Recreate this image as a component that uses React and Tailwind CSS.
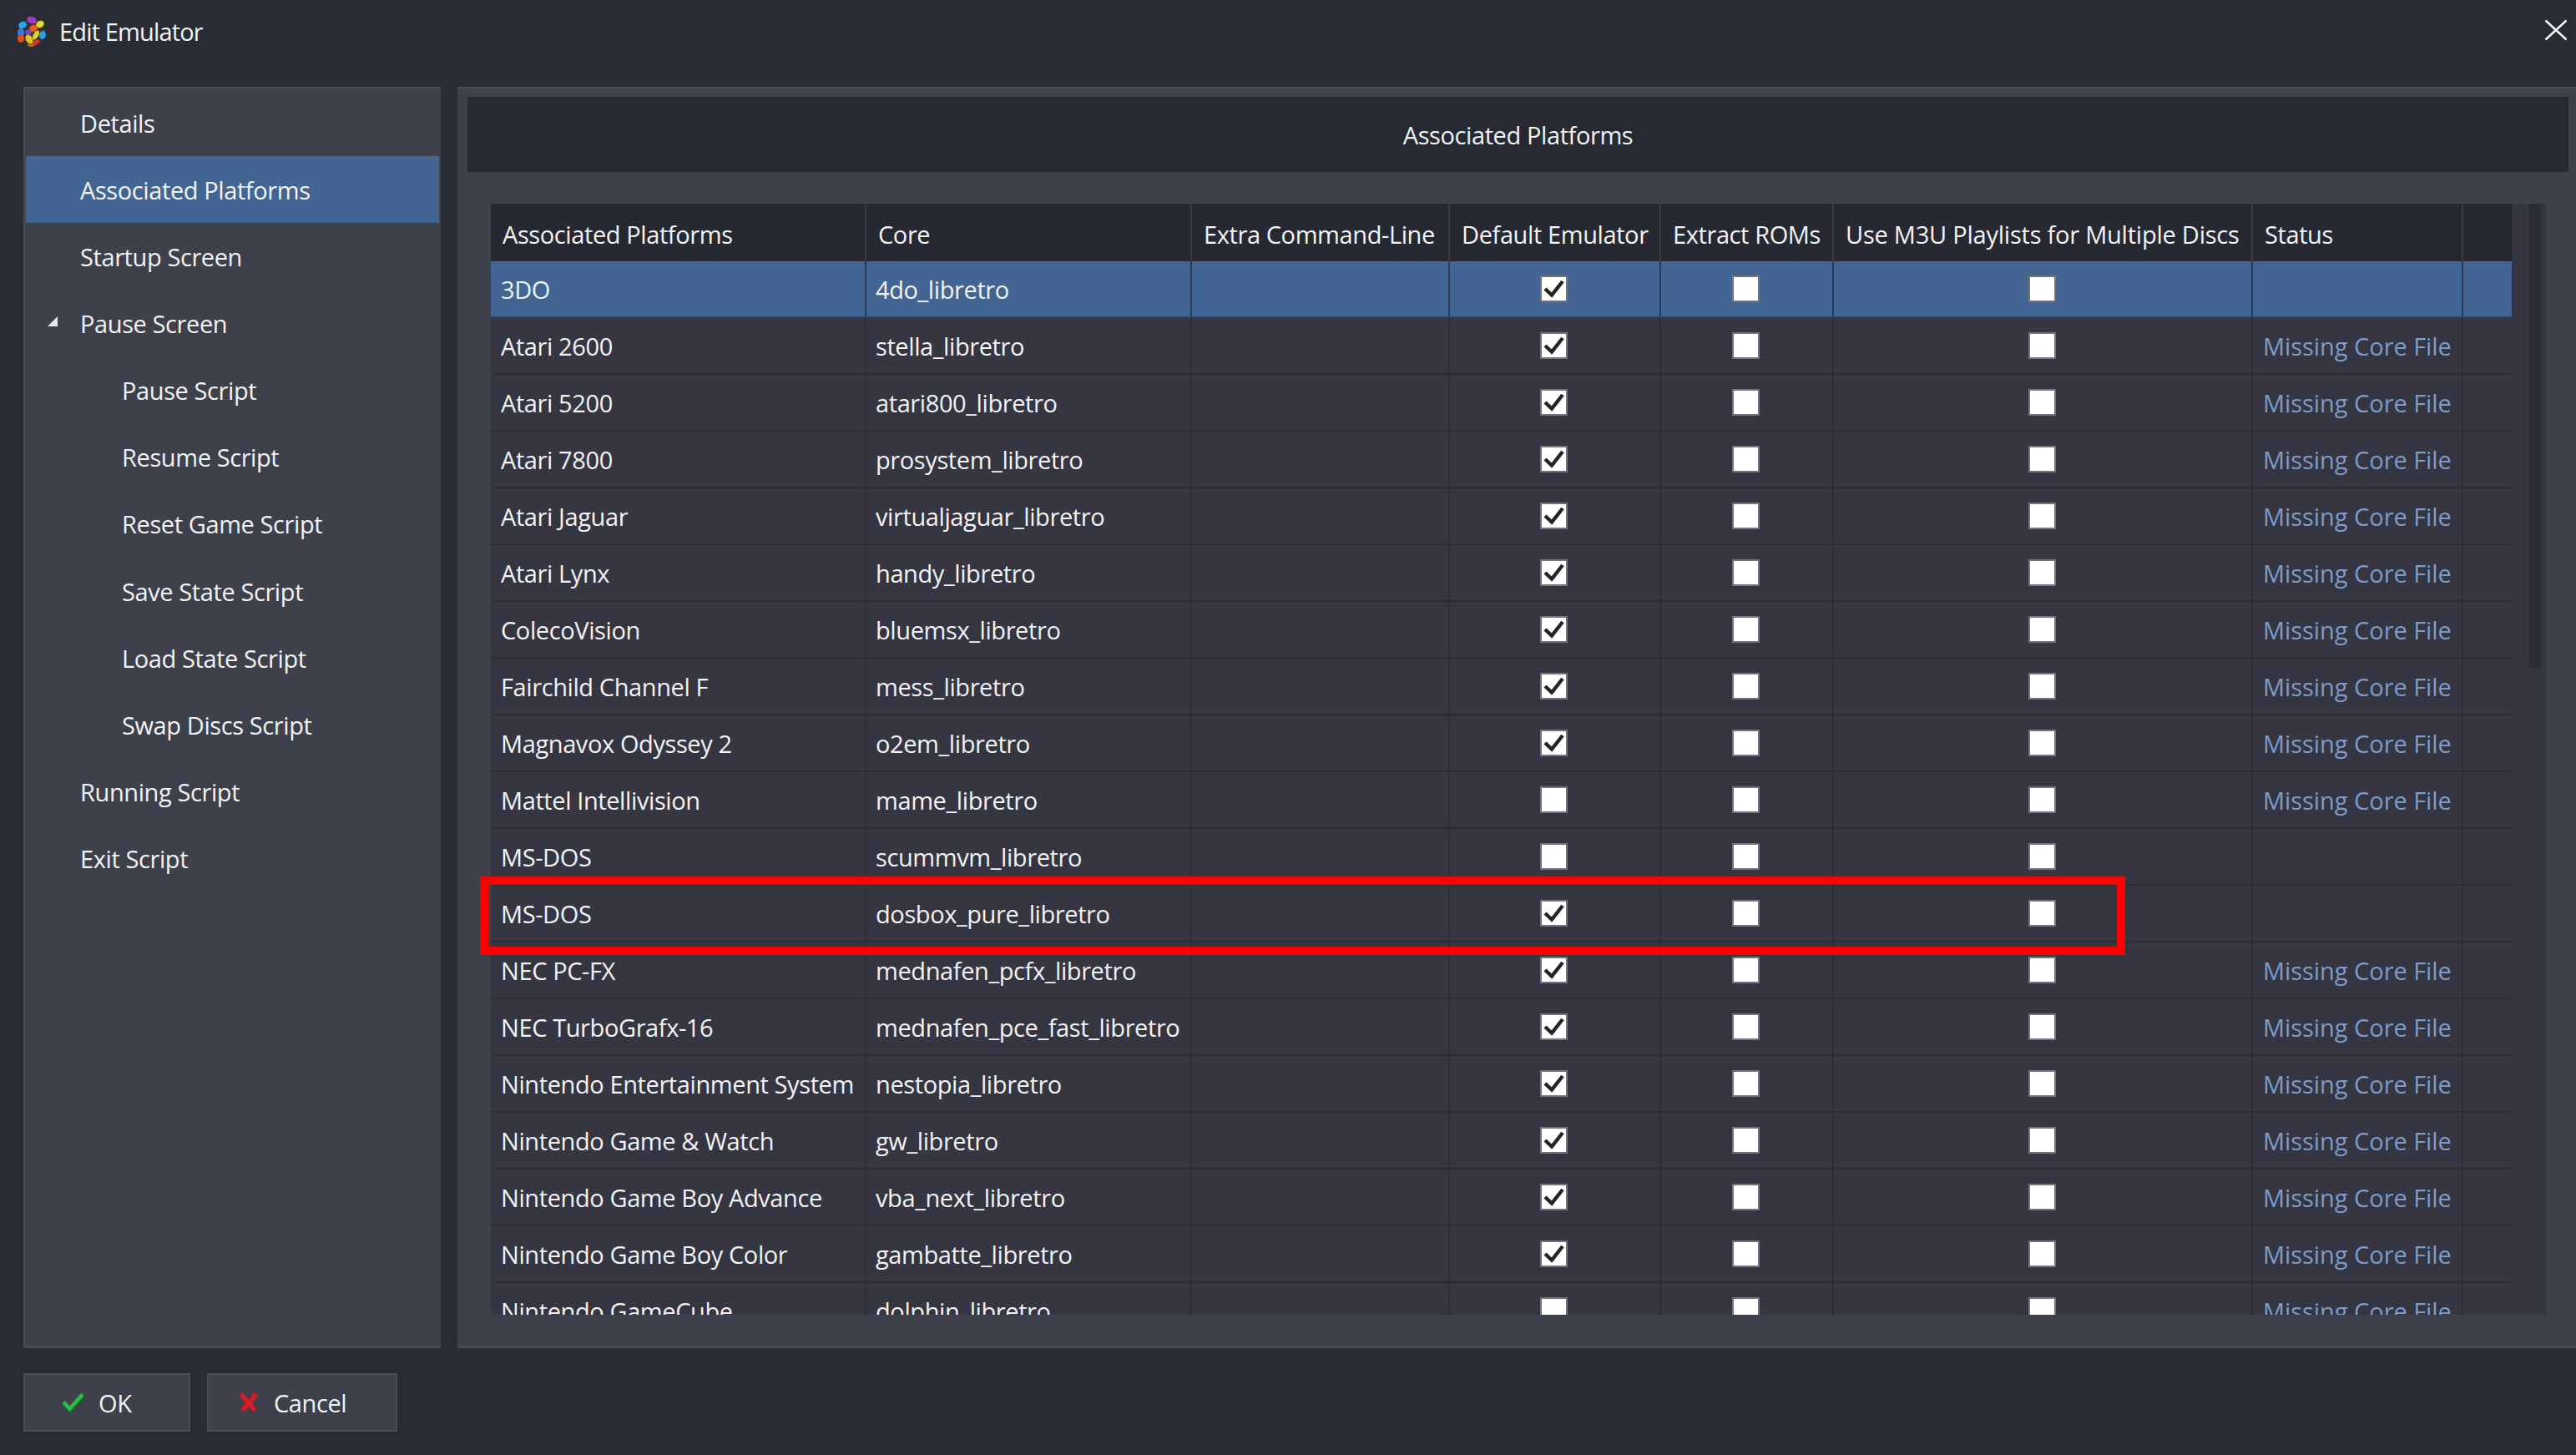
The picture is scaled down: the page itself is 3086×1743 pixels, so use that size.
import React from "react";

const font = "[font-family:'Open_Sans',sans-serif]";
const nav = [
  ["Details", 0],
  ["Associated Platforms", 0, true],
  ["Startup Screen", 0],
  ["Pause Screen", 0, false, true],
  ["Pause Script", 1],
  ["Resume Script", 1],
  ["Reset Game Script", 1],
  ["Save State Script", 1],
  ["Load State Script", 1],
  ["Swap Discs Script", 1],
  ["Running Script", 0],
  ["Exit Script", 0],
];
const M = "Missing Core File";
const rows = [
  ["3DO", "4do_libretro", 1, ""],
  ["Atari 2600", "stella_libretro", 1, M],
  ["Atari 5200", "atari800_libretro", 1, M],
  ["Atari 7800", "prosystem_libretro", 1, M],
  ["Atari Jaguar", "virtualjaguar_libretro", 1, M],
  ["Atari Lynx", "handy_libretro", 1, M],
  ["ColecoVision", "bluemsx_libretro", 1, M],
  ["Fairchild Channel F", "mess_libretro", 1, M],
  ["Magnavox Odyssey 2", "o2em_libretro", 1, M],
  ["Mattel Intellivision", "mame_libretro", 0, M],
  ["MS-DOS", "scummvm_libretro", 0, ""],
  ["MS-DOS", "dosbox_pure_libretro", 1, ""],
  ["NEC PC-FX", "mednafen_pcfx_libretro", 1, M],
  ["NEC TurboGrafx-16", "mednafen_pce_fast_libretro", 1, M],
  ["Nintendo Entertainment System", "nestopia_libretro", 1, M],
  ["Nintendo Game & Watch", "gw_libretro", 1, M],
  ["Nintendo Game Boy Advance", "vba_next_libretro", 1, M],
  ["Nintendo Game Boy Color", "gambatte_libretro", 1, M],
  ["Nintendo GameCube", "dolphin_libretro", 0, M],
];

function Logo() {
  const blobs = [
    [17, 28, 5, 4, "#22a7e8", -30],
    [28, 22, 6, 4, "#a23fc0", 20],
    [38, 27, 5, 4, "#e4dc1e", -30],
    [15, 37, 4, 5, "#2f7fe0", 0],
    [30, 32, 5, 4, "#ee5a14", -20],
    [41, 40, 4, 5, "#2a9fe8", 10],
    [33, 40, 3, 6, "#d8d81e", 30],
    [15, 44, 4, 5, "#e5501a", 0],
    [25, 45, 4, 6, "#e0c81e", -30],
    [33, 49, 5, 3, "#d8322a", -30],
    [24, 37, 4, 3, "#7a46c8", 20],
    [27, 52, 4, 2, "#b06a1a", 0],
  ];
  return (
    <svg width="40" height="44" viewBox="8 14 40 44" className="shrink-0">
      <circle cx="28" cy="37" r="16" fill="#3a3140" />
      {blobs.map(([x, y, rx, ry, c, r], i) => (
        <ellipse key={i} cx={x} cy={y} rx={rx} ry={ry} fill={c} transform={`rotate(${r} ${x} ${y})`} />
      ))}
    </svg>
  );
}

function Check({ on }) {
  return (
    <span className="flex h-[32px] w-[33px] items-center justify-center border-2 border-[#74757c] bg-white -translate-x-[1px]">
      {on ? (
        <svg width="27" height="24" viewBox="0 0 27 24">
          <path d="M3 12 L11 19.5 L24 3" fill="none" stroke="#23242a" strokeWidth="4.4" />
        </svg>
      ) : null}
    </span>
  );
}

const widths = ["w-[450px]", "w-[390px]", "w-[309px]", "w-[253px]", "w-[207px]", "w-[502px]", "w-[252px]", "w-[58px]"];
const head = ["Associated Platforms", "Core", "Extra Command-Line", "Default Emulator", "Extract ROMs", "Use M3U Playlists for Multiple Discs", "Status", ""];

function Row({ r, sel }) {
  const line = sel ? "border-[#2c3a58]" : "border-[#2b2d38]";
  const cell = `flex h-full items-center border-r-2 ${line}`;
  return (
    <div className={`flex h-[68px] shrink-0 border-b-2 ${sel ? "bg-[#436594] border-[#2f4468]" : "bg-[#353641] border-[#2b2d38]"}`}>
      <div className={`${cell} ${widths[0]} pl-[12px]`}>{r[0]}</div>
      <div className={`${cell} ${widths[1]} pl-[11px]`}>{r[1]}</div>
      <div className={`${cell} ${widths[2]}`}></div>
      <div className={`${cell} ${widths[3]} justify-center`}><Check on={r[2]} /></div>
      <div className={`${cell} ${widths[4]} justify-center`}><Check /></div>
      <div className={`${cell} ${widths[5]} justify-center`}><Check /></div>
      <div className={`${cell} ${widths[6]} pl-[12px] tracking-[-0.05px] text-[#7c9bcb]`}>{r[3]}</div>
      <div className={`${widths[7]} h-full`}></div>
    </div>
  );
}

export default function App() {
  return (
    <div className={`relative flex h-[1743px] w-[3086px] flex-col overflow-hidden bg-[#2a2c35] text-[29px] leading-none tracking-[-0.4px] text-[#f2f3f5] ${font}`}>
      <div className="flex h-[104px] shrink-0 items-start justify-between">
        <div className="flex items-center gap-[13px] pl-[18px] pt-[16px]">
          <Logo />
          <span className="-mt-[1px] tracking-[-0.85px]">Edit Emulator</span>
        </div>
        <svg width="28" height="26" viewBox="0 0 28 26" className="mr-[10px] mt-[23px]">
          <path d="M1.5 1.5 L26.5 24.5 M26.5 1.5 L1.5 24.5" stroke="#f2f3f5" strokeWidth="2.6" />
        </svg>
      </div>

      <div className="flex h-[1511px] shrink-0 gap-[20px] px-[28px] pr-0">
        <div className="w-[500px] shrink-0 border-b-2 border-l-2 border-t-2 border-[#4a4c59] bg-[#3e404c] pl-[1px] pr-[2px] pt-[1px]">
          {nav.map(([label, depth, sel, arrow]) => (
            <div
              key={label}
              className={`relative flex h-[80.15px] items-center ${depth ? "pl-[115px]" : "pl-[65px]"} ${sel ? "bg-[#436594]" : ""}`}
            >
              {arrow ? (
                <svg width="12" height="12" viewBox="0 0 12 12" className="absolute left-[26px] top-[32px]">
                  <path d="M12 0 V12 H0 Z" fill="#e8e9ec" />
                </svg>
              ) : null}
              {label}
            </div>
          ))}
        </div>

        <div className="flex min-w-0 flex-1 flex-col border-b-2 border-t-2 border-[#4a4c59] bg-[#3e404c] pl-[12px] pr-[9px] pt-[10px]">
          <div className="flex h-[90px] shrink-0 items-center justify-center bg-[#282a33] pt-[1px]">Associated Platforms</div>
          <div className="ml-[28px] mt-[38px] flex h-[1331px] w-[2462px] shrink-0 overflow-hidden bg-[#353641]">
            <div className="w-[2421px] shrink-0">
              <div className="flex h-[69px] bg-[#272932]">
                {head.map((h, i) => (
                  <div
                    key={i}
                    className={`flex h-full items-center pt-[3px] ${i === 5 ? "tracking-[-0.23px]" : ""} ${i < 7 ? "border-r-2 border-[#383a45]" : ""} ${widths[i]} pl-[14px]`}
                  >
                    {h}
                  </div>
                ))}
              </div>
              {rows.map((r, i) => (
                <Row key={i} r={r} sel={i === 0} />
              ))}
            </div>
            <div className="ml-[21px] h-[556px] w-[14px] rounded-b-[4px] bg-[#2b2d33]"></div>
          </div>
        </div>
      </div>

      <div className="flex shrink-0 gap-[20px] px-[28px] pt-[30px]">
        <button className={`flex h-[70px] w-[200px] items-center border-2 border-[#4a4c59] bg-[#3e404c] pl-[42px] ${font}`}>
          <svg width="32" height="26" viewBox="0 0 32 26" className="shrink-0">
            <path d="M4 13.5 L11.5 22 L27 5" fill="none" stroke="#12702a" strokeWidth="6" />
            <path d="M4 12.5 L11.5 20.5 L27 3.5" fill="none" stroke="#27c044" strokeWidth="4.5" />
          </svg>
          <span className="ml-[14px]">OK</span>
        </button>
        <button className={`flex h-[70px] w-[228px] items-center border-2 border-[#4a4c59] bg-[#3e404c] pl-[33px] ${font}`}>
          <svg width="29" height="26" viewBox="0 0 29 26" className="shrink-0">
            <path d="M5 3 L23 23 M24 3 L7 23" fill="none" stroke="#8f2630" strokeWidth="7" />
            <path d="M6 3 L22 22 M24 3 L8 22" fill="none" stroke="#d91c26" strokeWidth="4.6" />
          </svg>
          <span className="ml-[16px]">Cancel</span>
        </button>
      </div>

      <div className="absolute left-[575px] top-[1050px] h-[94px] w-[1971px] rounded-[2px] border-[10px] border-[#ff0000]"></div>
    </div>
  );
}
